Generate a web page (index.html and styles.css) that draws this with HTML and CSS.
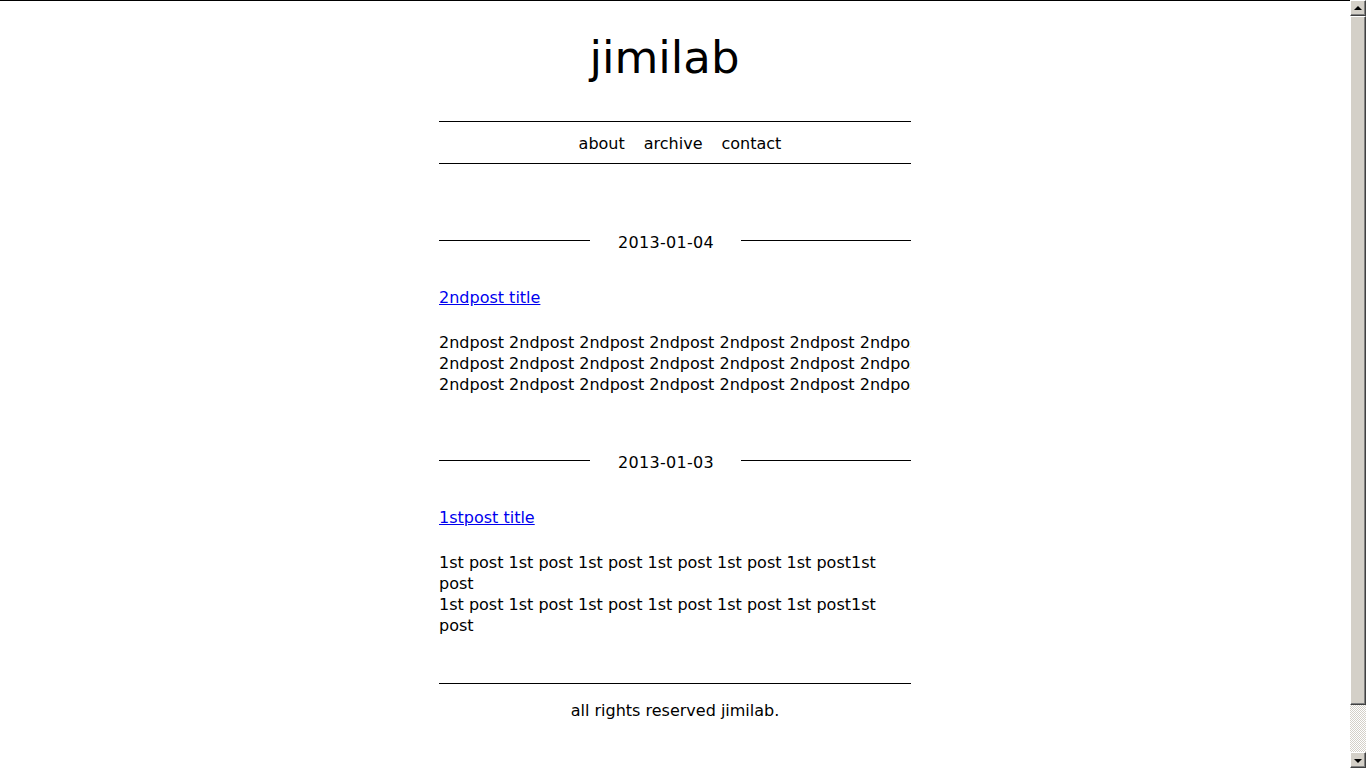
FILE: index.html
```html
<!DOCTYPE html>
<html>
<head>
<meta charset="utf-8">
<title>jimilab</title>
<link rel="stylesheet" href="styles.css">
</head>
<body>
<div class="page">
  <header class="site-header">
    <h1 class="site-title">jimilab</h1>
    <nav class="nav">
      <a class="nav-link" href="#">about</a>
      <a class="nav-link" href="#">archive</a>
      <a class="nav-link" href="#">contact</a>
    </nav>
  </header>

  <main class="posts">
    <article class="post">
      <div class="date-row"><span class="rule rule-left"></span><span class="date">2013-01-04</span><span class="rule rule-right"></span></div>
      <h2 class="post-title"><a href="#">2ndpost title</a></h2>
      <div class="post-body clip">
        <div class="nowrap">2ndpost 2ndpost 2ndpost 2ndpost 2ndpost 2ndpost 2ndpost2ndpost2ndpost</div>
        <div class="nowrap">2ndpost 2ndpost 2ndpost 2ndpost 2ndpost 2ndpost 2ndpost2ndpost2ndpost</div>
        <div class="nowrap">2ndpost 2ndpost 2ndpost 2ndpost 2ndpost 2ndpost 2ndpost2ndpost2ndpost</div>
      </div>
    </article>

    <article class="post">
      <div class="date-row"><span class="rule rule-left"></span><span class="date">2013-01-03</span><span class="rule rule-right"></span></div>
      <h2 class="post-title"><a href="#">1stpost title</a></h2>
      <div class="post-body">
        <div>1st post 1st post 1st post 1st post 1st post 1st post1st post</div>
        <div>1st post 1st post 1st post 1st post 1st post 1st post1st post</div>
      </div>
    </article>
  </main>

  <footer class="site-footer">all rights reserved jimilab.</footer>
</div>

<div class="scrollbar">
  <div class="sb-btn sb-up"><span class="arrow-up"></span></div>
  <div class="sb-thumb"></div>
  <div class="sb-track"></div>
  <div class="sb-btn sb-down"><span class="arrow-down"></span></div>
</div>
</body>
</html>
```

FILE: styles.css
```css
html, body {
  height: 100%;
}
body {
  margin: 0 16px 0 0;
  border-top: 1px solid #000;
  box-sizing: border-box;
  background: #fff;
  color: #000;
  font-family: "DejaVu Sans", Verdana, sans-serif;
  font-size: 16px;
  line-height: 21px;
  overflow: hidden;
}
.page {
  width: 472px;
  margin: 0 auto;
}
.site-title {
  margin: 0;
  padding: 29px 21px 0 0;
  height: 120px;
  box-sizing: border-box;
  text-align: center;
  font-weight: normal;
  font-size: 45px;
  line-height: 56px;
}
.nav {
  border-top: 1px solid #000;
  border-bottom: 1px solid #000;
  padding: 11px 0 9px 10px;
  display: flex;
  justify-content: center;
  gap: 19px;
}
.nav-link {
  color: #000;
  text-decoration: none;
}
.posts {
  padding-top: 68px;
}
.post {
  margin-bottom: 57px;
}
.post:last-child {
  margin-bottom: 0;
}
.date-row {
  display: flex;
  align-items: center;
  height: 21px;
}
.rule {
  display: block;
  height: 1px;
  background: #000;
  position: relative;
  top: -2px;
}
.rule-left {
  width: 151px;
}
.rule-right {
  flex: 1;
}
.date {
  padding: 0 27px 0 28px;
  letter-spacing: 0.3px;
}
.post-title {
  margin: 34px 0 0;
  font-size: 16px;
  font-weight: normal;
  line-height: 21px;
}
.post-title a {
  color: #0000ee;
}
.post-body {
  margin-top: 24px;
}
.clip {
  overflow: hidden;
}
.nowrap {
  white-space: nowrap;
}
.site-footer {
  margin-top: 47px;
  border-top: 1px solid #000;
  padding-top: 16px;
  text-align: center;
}

/* classic scrollbar overlay */
.scrollbar {
  position: fixed;
  top: 0;
  right: 0;
  width: 16px;
  height: 768px;
  display: flex;
  flex-direction: column;
  background: #d4d0c8;
}
.sb-btn {
  height: 16px;
  box-sizing: border-box;
  background: #d4d0c8;
  border-top: 1px solid #fff;
  border-left: 1px solid #fff;
  border-right: 1px solid #404040;
  border-bottom: 1px solid #404040;
  box-shadow: inset -1px -1px 0 #808080;
  display: flex;
  align-items: center;
  justify-content: center;
}
.sb-thumb {
  height: 689px;
  box-sizing: border-box;
  background: #d4d0c8;
  border-top: 1px solid #fff;
  border-left: 1px solid #fff;
  border-right: 1px solid #404040;
  border-bottom: 1px solid #404040;
  box-shadow: inset -1px -1px 0 #808080;
}
.sb-track {
  flex: 1;
  background-color: #fff;
  background-image: repeating-conic-gradient(#d4d0c8 0 25%, #fff 0 50%);
  background-size: 2px 2px;
}
.arrow-up {
  width: 0;
  height: 0;
  border-left: 4px solid transparent;
  border-right: 4px solid transparent;
  border-bottom: 4px solid #000;
  margin-top: -1px;
}
.arrow-down {
  width: 0;
  height: 0;
  border-left: 4px solid transparent;
  border-right: 4px solid transparent;
  border-top: 4px solid #000;
  margin-top: 1px;
}
```
